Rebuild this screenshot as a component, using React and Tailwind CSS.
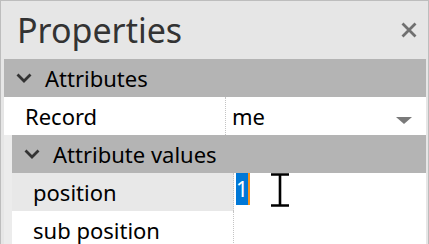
const font = { fontFamily: '"Noto Sans", "Open Sans", sans-serif' };

function Chevron() {
  return (
    <svg width="16" height="10" viewBox="0 0 16 10" className="shrink-0">
      <path d="M1.5 1.5 L8 8 L14.5 1.5" fill="none" stroke="#333" strokeWidth="2.8" />
    </svg>
  );
}

function Section({ title }) {
  return (
    <div className="h-[38px] bg-[#b4b4b4] flex items-center pl-[12px] gap-[13px]">
      <Chevron />
      <span className="text-[22px] text-black leading-none pb-[1px]">{title}</span>
    </div>
  );
}

function Row({ name, children, active }) {
  return (
    <div className="h-[38px] flex bg-white">
      <div
        className={
          "w-[222px] shrink-0 flex items-center pl-[21px] text-[22px] leading-none text-black border-r border-dotted border-[#c4c4c4] " +
          (active ? "bg-[#e8e8e8]" : "bg-white")
        }
      >
        {name}
      </div>
      <div className="flex-1 flex items-center relative">{children}</div>
    </div>
  );
}

export default function App() {
  return (
    <div
      style={font}
      className="w-[429px] h-[244px] overflow-hidden bg-[#e6e6e6] border border-b-0 border-[#bdbdbd] flex flex-col"
    >
      <div className="h-[58px] shrink-0 flex items-center justify-between pl-[16px] pr-[11px]">
        <span className="text-[34px] text-[#333] leading-none">Properties</span>
        <svg width="16" height="16" viewBox="0 0 16 16">
          <path d="M1.5 1.5 L14.5 14.5 M14.5 1.5 L1.5 14.5" stroke="#707070" strokeWidth="2.8" />
        </svg>
      </div>
      <div className="ml-[3px] mr-[2px] flex-1 bg-white flex flex-col">
        <Section title="Attributes" />
        <Row name="Record">
          <span className="pl-[6px] text-[22px] leading-none text-black">me</span>
          <svg width="16" height="8" viewBox="0 0 16 8" className="absolute right-[14px] top-[20px]">
            <path d="M0 0 L16 0 L8 7 Z" fill="#7a7a7a" />
          </svg>
        </Row>
        <div className="pl-[8px] bg-[#ececec] flex-1 flex flex-col">
          <Section title="Attribute values" />
          <Row name="position" active>
            <div className="self-start ml-[2px] h-[32px] w-[14px] bg-[#0078d7] border-r-2 border-[#f7931e] flex items-center justify-center text-white text-[21px] leading-none">
              1
            </div>
            <svg width="20" height="34" viewBox="0 0 20 34" className="absolute left-[36px] top-0">
              <path d="M1 1.5 H19 M1 32.5 H19 M10 1.5 V32.5" stroke="#000" strokeWidth="2.6" />
            </svg>
          </Row>
          <Row name="sub position" />
        </div>
      </div>
    </div>
  );
}
